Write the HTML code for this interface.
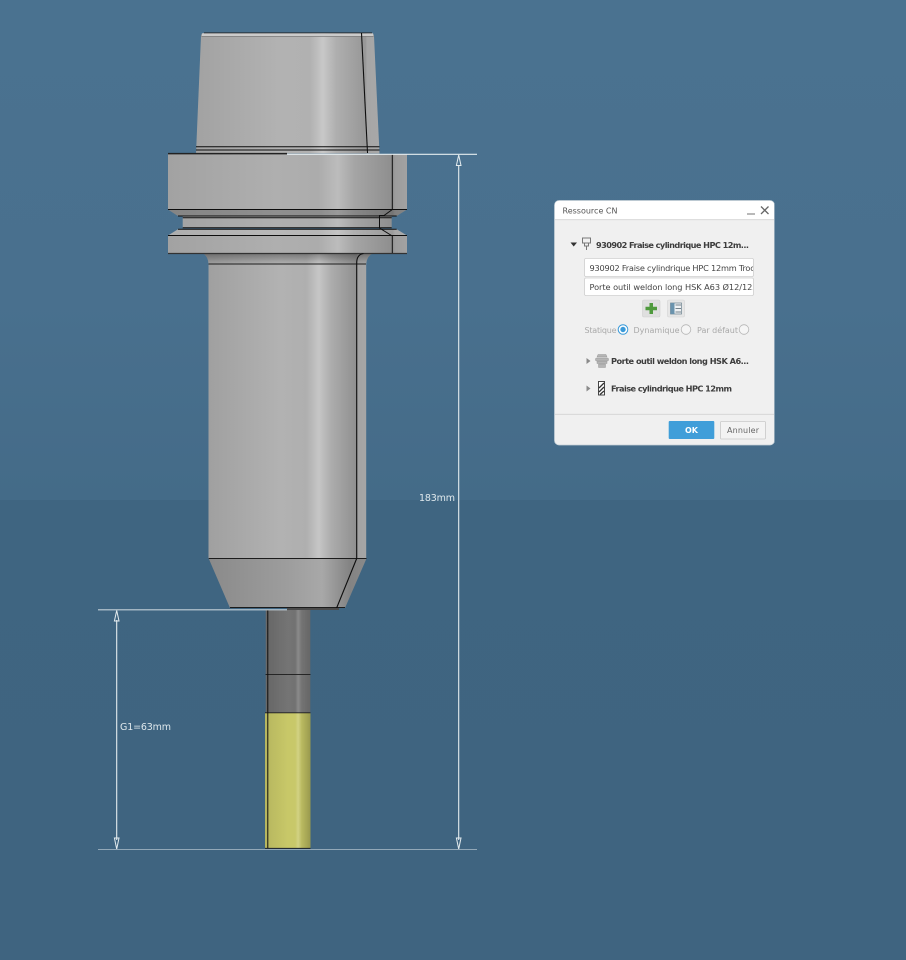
<!DOCTYPE html>
<html><head><meta charset="utf-8"><title>Ressource CN</title>
<style>
html,body{margin:0;padding:0;width:906px;height:960px;overflow:hidden;background:#3f6480}
svg{display:block}
text{font-family:"DejaVu Sans",sans-serif}
.dim{font-family:"DejaVu Sans",sans-serif;font-weight:400}
</style></head><body>
<svg width="906" height="960" viewBox="0 0 906 960" xmlns="http://www.w3.org/2000/svg">
<defs>
<linearGradient id="bgt" x1="0" y1="0" x2="0" y2="1"><stop offset="0" stop-color="#4a7290"/><stop offset="0.6" stop-color="#49708e"/><stop offset="1" stop-color="#446b88"/></linearGradient>
<linearGradient id="bgb" x1="0" y1="0" x2="0" y2="1"><stop offset="0" stop-color="#3f6581"/><stop offset="1" stop-color="#3f6480"/></linearGradient>
<linearGradient id="g1" gradientUnits="userSpaceOnUse" x1="196" y1="0" x2="380" y2="0"><stop offset="0" stop-color="#a2a2a2"/><stop offset=".45" stop-color="#b2b2b2"/><stop offset=".62" stop-color="#b1b1b1"/><stop offset=".69" stop-color="#c8c8c8"/><stop offset=".76" stop-color="#afafaf"/><stop offset=".92" stop-color="#979797"/><stop offset=".93" stop-color="#a6a6a6"/><stop offset="1" stop-color="#a8a8a8"/></linearGradient>
<linearGradient id="g2" gradientUnits="userSpaceOnUse" x1="168" y1="0" x2="407" y2="0"><stop offset="0" stop-color="#a2a2a2"/><stop offset=".45" stop-color="#afafaf"/><stop offset=".63" stop-color="#acacac"/><stop offset=".71" stop-color="#bcbcbc"/><stop offset=".78" stop-color="#a5a5a5"/><stop offset=".94" stop-color="#8e8e8e"/><stop offset=".95" stop-color="#9c9c9c"/><stop offset="1" stop-color="#a2a2a2"/></linearGradient>
<linearGradient id="g3" gradientUnits="userSpaceOnUse" x1="209" y1="0" x2="366" y2="0"><stop offset="0" stop-color="#a0a0a0"/><stop offset=".45" stop-color="#b2b2b2"/><stop offset=".62" stop-color="#afafaf"/><stop offset=".7" stop-color="#c6c6c6"/><stop offset=".78" stop-color="#acacac"/><stop offset=".94" stop-color="#8f8f8f"/><stop offset=".95" stop-color="#a3a3a3"/><stop offset="1" stop-color="#a6a6a6"/></linearGradient>
<linearGradient id="g4" gradientUnits="userSpaceOnUse" x1="209" y1="0" x2="366" y2="0"><stop offset="0" stop-color="#8a8a8a"/><stop offset=".5" stop-color="#9d9d9d"/><stop offset=".72" stop-color="#a8a8a8"/><stop offset=".9" stop-color="#838383"/><stop offset="1" stop-color="#8a8a8a"/></linearGradient>
<linearGradient id="g5" gradientUnits="userSpaceOnUse" x1="265" y1="0" x2="311" y2="0"><stop offset="0" stop-color="#666"/><stop offset=".5" stop-color="#747474"/><stop offset=".66" stop-color="#727272"/><stop offset=".72" stop-color="#8a8a8a"/><stop offset=".8" stop-color="#737373"/><stop offset="1" stop-color="#656565"/></linearGradient>
<linearGradient id="g6" gradientUnits="userSpaceOnUse" x1="265" y1="0" x2="311" y2="0"><stop offset="0" stop-color="#b6b65f"/><stop offset=".5" stop-color="#c8c868"/><stop offset=".66" stop-color="#c8c86a"/><stop offset=".72" stop-color="#d2d284"/><stop offset=".8" stop-color="#b9b960"/><stop offset="1" stop-color="#97974c"/></linearGradient>
<linearGradient id="nk" x1="0" y1="0" x2="0" y2="1"><stop offset="0" stop-color="#000" stop-opacity=".32"/><stop offset="1" stop-color="#000" stop-opacity="0"/></linearGradient>
<filter id="soft" x="0" y="0" width="100%" height="100%"><feGaussianBlur stdDeviation=".38"/></filter>
</defs>

<rect width="906" height="500" fill="url(#bgt)"/>
<rect y="500" width="906" height="460" fill="url(#bgb)"/>

<g filter="url(#soft)">
<!-- taper -->
<path d="M203 33H372Q373.500 33 374 36L379.500 153.500H196L201 36Q201.500 33 203 33Z" fill="url(#g1)"/>
<rect x="202" y="33.500" width="171" height="3" fill="#cbcbcb"/>
<path d="M204 32.800H372" stroke="#1a1a1a" stroke-width="1" fill="none"/>
<path d="M201.500 36.500H373.500" stroke="#555" stroke-width=".6" fill="none"/>
<path d="M196 146.800H379.500M196 150H379.500" stroke="#0c0c0c" stroke-width="1" fill="none"/>
<path d="M361.500 33L367.500 153" stroke="#111" stroke-width="1.100" fill="none"/>

<!-- flange -->
<rect x="168" y="154" width="239" height="55.500" fill="url(#g2)"/>
<path d="M168 209.500H407L396.700 216H178Z" fill="url(#g2)"/>
<path d="M168 209.500H407L396.700 216H178Z" fill="#000" opacity=".18"/>
<rect x="182.700" y="216" width="209" height="12" fill="url(#g2)"/>
<path d="M178 229.300H396.700L407 235.500H168Z" fill="url(#g2)"/>
<path d="M178 229.300H396.700L407 235.500H168Z" fill="#fff" opacity=".12"/>
<rect x="168" y="235.500" width="239" height="18" fill="url(#g2)"/>
<path d="M203 253.500H372.500Q367 256 366.200 264H208.500Q208 256 203 253.500Z" fill="url(#g3)"/>
<path d="M203 253.500H372.500Q367 256 366.200 264H208.500Q208 256 203 253.500Z" fill="url(#nk)"/>
<path d="M168 209.500H407M178 216H396.700M182.700 217.800H391.700M182.700 227.800H391.700M178 229.300H396.700M168 235.500H407" stroke="#111" stroke-width="1" fill="none"/>
<path d="M168 253.500H407" stroke="#333" stroke-width="1.300" fill="none"/>
<path d="M392.300 154V209.500L384 215.500H379.500V228L392.300 236V253" stroke="#111" stroke-width="1" fill="none"/>
<path d="M168 153.600H287" stroke="#222" stroke-width="1.500"/>

<!-- body -->
<rect x="208.500" y="264" width="157.700" height="294.500" fill="url(#g3)"/>
<path d="M208.500 264H366" stroke="#1a1a1a" stroke-width="1"/>
<path d="M363.500 253.500Q356.700 254.500 356.700 263V558.500" stroke="#111" stroke-width="1.100" fill="none"/>
<path d="M208.700 558.500H366.500L345 608H230Z" fill="url(#g4)"/>
<path d="M208.700 558.500H366.500M230 607.500H345" stroke="#1a1a1a" stroke-width="1" fill="none"/>
<path d="M356.700 558.500L336 609.500" stroke="#111" stroke-width="1.100" fill="none"/>
<rect x="287" y="608" width="52" height="2" fill="#4c4c4c"/>

<!-- shank -->
<rect x="265.700" y="610" width="44.600" height="103" fill="url(#g5)"/>
<rect x="265" y="713" width="45.500" height="135.300" fill="url(#g6)"/>
<path d="M265.500 674.400H310.500M265 712.800H310.500M265 848.300H310.500" stroke="#1a1a1a" stroke-width=".9" fill="none"/>
<path d="M267.800 610V848" stroke="#0c0c0c" stroke-width="1" fill="none"/>

<!-- dims -->
<g stroke="#e4ecef" fill="none">
<path d="M98 609.800H287" stroke="#c3d0d8" stroke-width="1.200"/>
<path d="M287 154.300H477" stroke-width="1.100"/>
<path d="M98 849.500H477" stroke-width="1.100"/>
<path d="M116.700 620V840M458.700 165V840" stroke-width="1.100"/>
<path d="M116.700 610.500L119 621H114.400ZM116.700 849L119 838H114.400ZM458.700 155L461 165.500H456.400ZM458.700 849L461 838H456.400Z" stroke-width="1"/>
</g>
<text class="dim" x="419" y="501" font-size="9.500" fill="#dfe8ec" textLength="36">183mm</text>
<text class="dim" x="120" y="730" font-size="9.500" fill="#dfe8ec" textLength="51">G1=63mm</text>

<!-- dialog -->
<rect x="554.500" y="200.500" width="220" height="244.500" rx="4.500" fill="#f0f0f0" stroke="#c6d1d8" stroke-width=".7"/>
<path d="M555 219.500V205Q555 201 559 201H770Q774 201 774 205V219.500Z" fill="#fff"/>
<path d="M555 219.700H774M555 414.300H774" stroke="#d3d3d3" stroke-width=".9"/>
<text x="562.500" y="213.500" font-size="8" fill="#555" textLength="55">Ressource CN</text>
<path d="M747 214H755" stroke="#8a8a8a" stroke-width="1.200"/>
<path d="M761 206.500L768.500 214M768.500 206.500L761 214" stroke="#666" stroke-width="1.300" fill="none"/>

<path d="M570.500 242.500H577L573.700 246.500Z" fill="#333"/>
<g fill="none" stroke="#777" stroke-width="1"><rect x="582.500" y="238" width="8" height="5"/><path d="M584.500 243V246H588.500V243M586.500 246V250"/></g>
<text x="596" y="248" font-size="8.200" font-weight="700" fill="#3c3c3c" textLength="153">930902 Fraise cylindrique HPC 12m...</text>

<rect x="584.500" y="258.500" width="169" height="18" rx="1.500" fill="#fff" stroke="#cfcfcf" stroke-width=".8"/>
<rect x="584.500" y="278" width="169" height="17.500" rx="1.500" fill="#fff" stroke="#cfcfcf" stroke-width=".8"/>
<svg x="585" y="259" width="168" height="36"><text x="4.500" y="12" font-size="8.200" fill="#444" textLength="175">930902 Fraise cylindrique HPC 12mm Trocho</text><text x="4.500" y="31" font-size="8.200" fill="#444" textLength="168">Porte outil weldon long HSK A63 Ø12/125</text></svg>

<rect x="642.500" y="300" width="17.500" height="17" rx="1.500" fill="#dfdfdf" stroke="#d0d0d0" stroke-width=".6"/>
<path d="M649.500 303H653V306.800H657V310.300H653V314H649.500V310.300H645.500V306.800H649.500Z" fill="#4f9a3c"/>
<rect x="667.500" y="300" width="17" height="17" rx="1.500" fill="#e6e6e6" stroke="#d4d4d4" stroke-width=".6"/>
<rect x="670.500" y="303" width="11" height="11" fill="#eef1f3" stroke="#6a7f8c" stroke-width=".7"/>
<rect x="670.500" y="303" width="4" height="11" fill="#6b93ad"/>
<path d="M675.500 305H681M675.500 308.500H681M675.500 312H681" stroke="#75838c" stroke-width="1.100"/>

<g font-size="8" fill="#a9a9a9">
<text x="584.500" y="333" textLength="32">Statique</text>
<text x="633.500" y="333" textLength="46">Dynamique</text>
<text x="697" y="333" textLength="41">Par défaut</text>
</g>
<circle cx="623" cy="329.500" r="4.800" fill="#fff" stroke="#3a9ad9" stroke-width="1"/><circle cx="623" cy="329.500" r="2.700" fill="#3a9ad9"/>
<circle cx="686" cy="329.500" r="4.800" fill="#f5f5f5" stroke="#b5b5b5" stroke-width=".8"/>
<circle cx="744" cy="329.500" r="4.800" fill="#f5f5f5" stroke="#b5b5b5" stroke-width=".8"/>

<path d="M586.500 358L590.500 361L586.500 364Z" fill="#8a8a8a"/>
<g fill="#b5b5b5" stroke="#8a8a8a" stroke-width=".4"><path d="M598 354.500H606L607 357H597Z"/><rect x="595.500" y="358" width="13" height="3" rx="1"/><rect x="597" y="361.500" width="10" height="2"/><path d="M598.500 364H605.500V367.500H598.500Z"/></g>
<text x="611" y="364" font-size="8.200" font-weight="700" fill="#3c3c3c" textLength="138">Porte outil weldon long HSK A6...</text>

<path d="M586.500 385.500L590.500 388.500L586.500 391.500Z" fill="#8a8a8a"/>
<rect x="598.500" y="381.500" width="6" height="13.500" fill="#fff" stroke="#333" stroke-width=".9"/>
<path d="M599 388L604 383M599 392L604 387M600 394.500L604 391" stroke="#333" stroke-width="1.300"/>
<text x="611" y="391.500" font-size="8.200" font-weight="700" fill="#3c3c3c" textLength="121">Fraise cylindrique HPC 12mm</text>

<rect x="668.700" y="421" width="45.600" height="18" rx="1" fill="#3f9ed9"/>
<text x="691.500" y="433" font-size="8" font-weight="700" fill="#fff" text-anchor="middle">OK</text>
<rect x="720.500" y="421.500" width="45" height="17.500" rx="1" fill="#f3f3f3" stroke="#c9c9c9" stroke-width=".8"/>
<text x="727" y="433" font-size="8" fill="#666" textLength="32">Annuler</text>
</g>
</svg>
</body></html>
